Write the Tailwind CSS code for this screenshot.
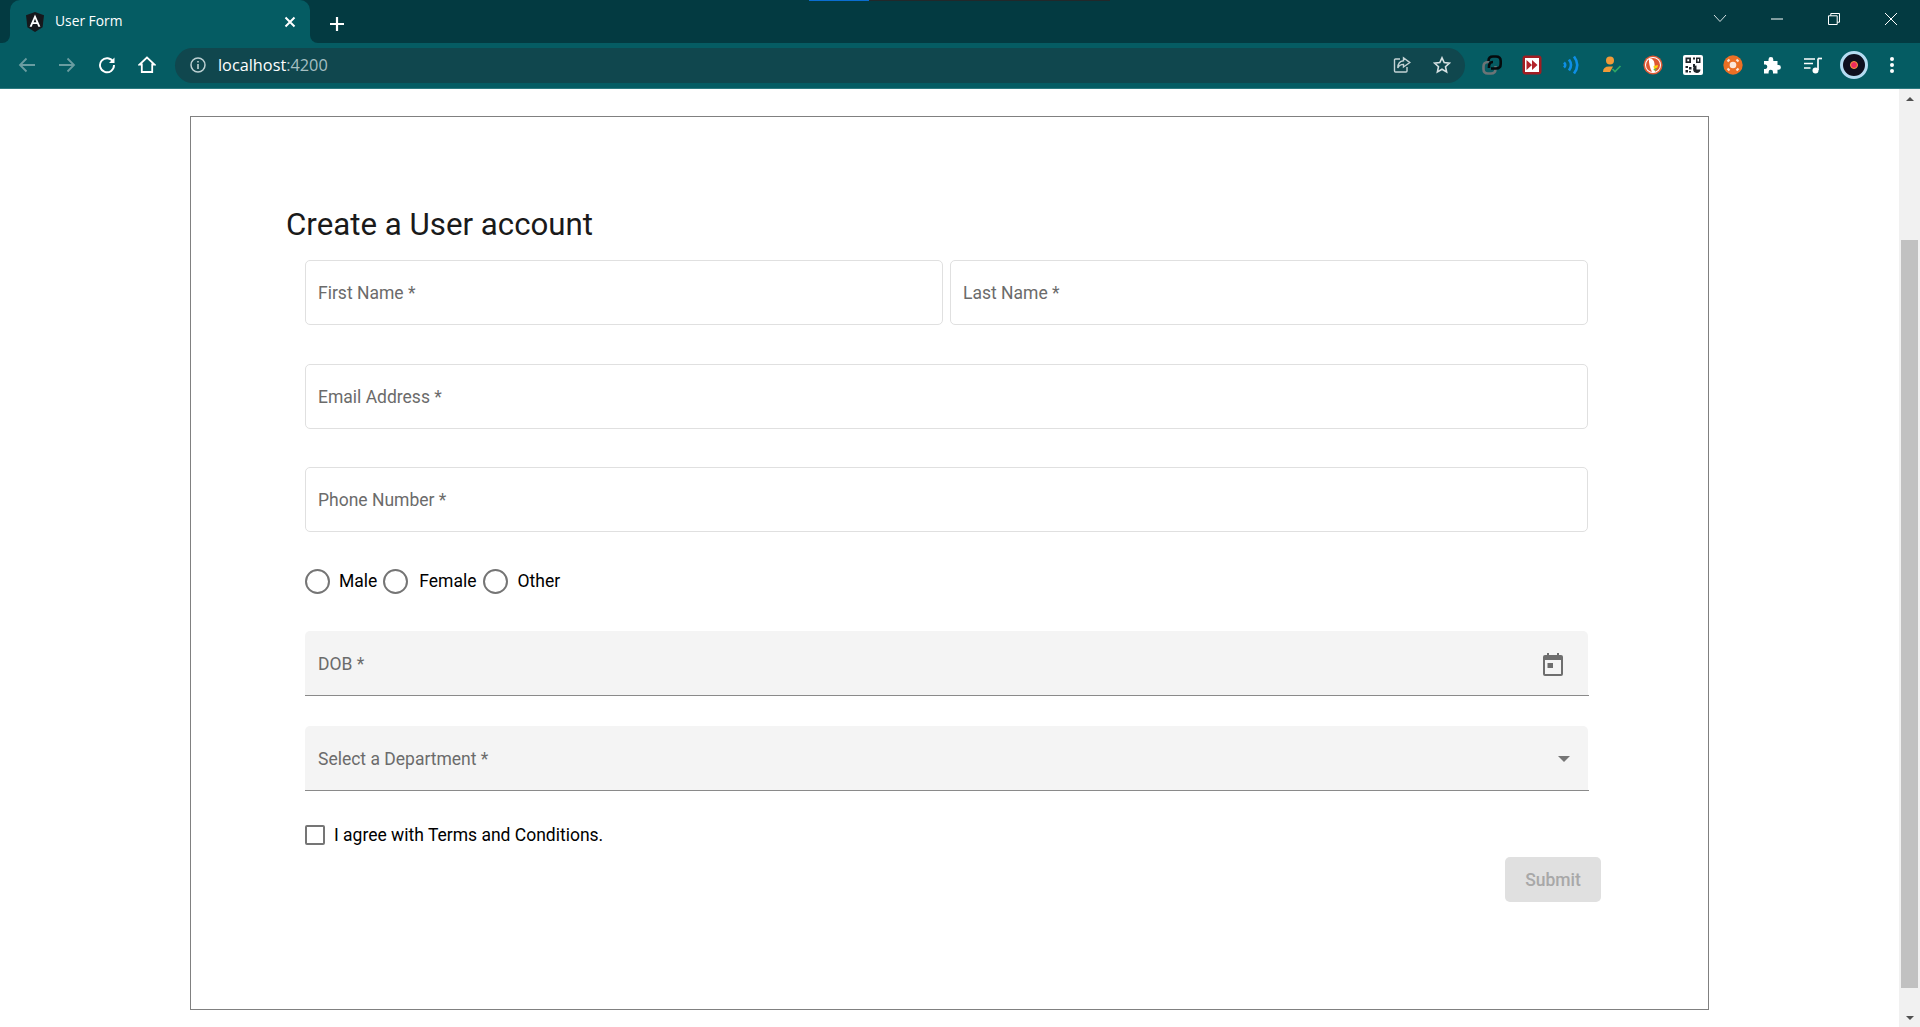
<!DOCTYPE html>
<html lang="en">
<head>
    <meta charset="UTF-8">
    <title>User Form</title>
    <script src="https://cdn.jsdelivr.net/npm/@tailwindcss/browser@4"></script>
</head>
<body class="h-[1027px] overflow-hidden bg-white flex flex-col font-['Roboto',sans-serif]">
    <!-- Tab strip -->
    <div class="relative h-[43px] bg-[#033a41] flex items-end pl-[10px] shrink-0">
        <div class="absolute left-[809px] top-0 w-[60px] h-px bg-[#0a6ed1]"></div>
        <div class="absolute left-[869px] top-0 w-[241px] h-px bg-[#22282a]"></div>
        <div class="relative w-[300px] h-[43px] bg-[#055c63] rounded-t-[10px] flex items-center pl-[15px] pr-[13px]">
            <div class="absolute left-[-8px] bottom-0 w-2 h-2 bg-[#055c63]"><div class="w-2 h-2 bg-[#033a41] rounded-br-[8px]"></div></div>
            <div class="absolute right-[-8px] bottom-0 w-2 h-2 bg-[#055c63]"><div class="w-2 h-2 bg-[#033a41] rounded-bl-[8px]"></div></div>
            <svg class="w-5 h-5 shrink-0" viewBox="0 0 20 20"><path d="M10 0 L1 3.2 L2.4 15.2 L10 20 L17.6 15.2 L19 3.2Z" fill="#16181c"/><path d="M10 2.6 L4.6 14.8 H6.7 L7.8 12 H12.2 L13.3 14.8 H15.4Z M8.6 10.2 L10 6.8 L11.4 10.2Z" fill="#fff" fill-rule="evenodd"/></svg>
            <span class="ml-[10px] text-[13.8px] text-white font-['Open_Sans',sans-serif]">User Form</span>
            <svg class="ml-auto w-[14px] h-[14px]" viewBox="0 0 14 14"><path d="M2.5 2.5 L11.5 11.5 M11.5 2.5 L2.5 11.5" stroke="#fff" stroke-width="2"/></svg>
        </div>
        <svg class="ml-[19px] mb-[11px] w-4 h-4" viewBox="0 0 16 16"><path d="M8 1 V15 M1 8 H15" stroke="#fff" stroke-width="2.2"/></svg>
        <!-- Window controls -->
        <div class="ml-auto flex items-center h-[43px] pb-[6px] pr-[23px]">
            <svg class="w-[14px] h-[9px] mr-[44px]" viewBox="0 0 14 9"><path d="M1 1 L7 7.5 L13 1" fill="none" stroke="#d5e0e2" stroke-width="1"/></svg>
            <svg class="w-3 h-3 mr-[45px]" viewBox="0 0 12 12"><path d="M0 6 H12" stroke="#fff" stroke-width="1"/></svg>
            <svg class="w-3 h-3 mr-[45px]" viewBox="0 0 12 12"><path d="M.5 2.8 H9.2 V11.5 H.5Z M2.8 2.8 V.5 H11.5 V9.2 H9.2" fill="none" stroke="#fff" stroke-width="1"/></svg>
            <svg class="w-3 h-3" viewBox="0 0 12 12"><path d="M0 0 L12 12 M12 0 L0 12" stroke="#fff" stroke-width="1"/></svg>
        </div>
    </div>

    <!-- Toolbar -->
    <div class="h-[46px] bg-[#055c63] border-b border-[#2d7a80] flex items-center shrink-0 pb-[1px]">
        <svg class="ml-[18px] w-[18px] h-[18px]" viewBox="0 0 18 18"><path d="M17 9 H2 M8.5 2.5 L2 9 L8.5 15.5" fill="none" stroke="#6a9da1" stroke-width="1.8"/></svg>
        <svg class="ml-[22px] w-[18px] h-[18px]" viewBox="0 0 18 18"><path d="M1 9 H16 M9.5 2.5 L16 9 L9.5 15.5" fill="none" stroke="#6a9da1" stroke-width="1.8"/></svg>
        <svg class="ml-[22px] w-[18px] h-[18px]" viewBox="0 0 18 18"><path d="M15.2 6 A7 7 0 1 0 16 9" fill="none" stroke="#fff" stroke-width="1.9"/><path d="M16.5 1.5 V7 H11Z" fill="#fff"/></svg>
        <svg class="ml-[22px] w-[18px] h-[18px]" viewBox="0 0 18 18"><path d="M9 1.5 L1.5 8.5 H3.8 V16 H14.2 V8.5 H16.5Z" fill="none" stroke="#fff" stroke-width="1.8"/></svg>
        <!-- Omnibox -->
        <div class="ml-[19px] w-[1290px] h-[35px] bg-[#10474e] rounded-full flex items-center pl-[15px] pr-[14px]">
            <svg class="w-4 h-4" viewBox="0 0 16 16"><circle cx="8" cy="8" r="7" fill="none" stroke="#bcd0d2" stroke-width="1.5"/><path d="M8 7 V12 M8 4 V5.6" stroke="#bcd0d2" stroke-width="1.6"/></svg>
            <span class="ml-[12px] text-[16.3px] text-white font-['Open_Sans',sans-serif]">localhost<span class="text-[#a5bfc2]">:4200</span></span>
            <svg class="ml-auto w-[18px] h-[18px]" viewBox="0 0 18 18"><path d="M7 3 H2.5 Q1.5 3 1.5 4 V15 Q1.5 16 2.5 16 H13 Q14 16 14 15 V11" fill="none" stroke="#c3d3d5" stroke-width="1.4"/><path d="M10.5 1.8 L16.8 6.6 L10.5 11 V8.4 Q6.5 8.4 4.8 12 Q5 5.2 10.5 4.8Z" fill="none" stroke="#c3d3d5" stroke-width="1.4"/></svg>
            <svg class="ml-[22px] w-[18px] h-[18px]" viewBox="0 0 18 18"><path d="M9 1.8 L11.2 6.6 L16.4 7.2 L12.5 10.7 L13.6 15.9 L9 13.2 L4.4 15.9 L5.5 10.7 L1.6 7.2 L6.8 6.6Z" fill="none" stroke="#d5e0e2" stroke-width="1.6"/></svg>
        </div>
        <!-- Extensions -->
        <svg class="ml-[17px] w-5 h-5" viewBox="0 0 20 20"><path d="M7 7 H6 Q1.5 7 1.5 11.5 V14 Q1.5 18.5 6 18.5 H9 Q13.5 18.5 13.5 14 V11" fill="none" stroke="#6b7476" stroke-width="2.6"/><path d="M7 13 Q6.5 7 11 7 M9 13.5 H14 Q18.7 13.5 18.7 9 V6 Q18.7 1.5 14 1.5 H11 Q6.5 1.5 6.5 6" fill="none" stroke="#050a0c" stroke-width="2.6"/></svg>
        <svg class="ml-[20px] w-5 h-5" viewBox="0 0 20 20"><rect x=".5" y=".5" width="19" height="19" rx="3" fill="#a11d22"/><rect x="3" y="3" width="14" height="14" fill="#fff"/><path d="M4.5 5 L10 10 L4.5 15Z M10 5 L15.5 10 L10 15Z" fill="#b3232a"/></svg>
        <svg class="ml-[20px] w-5 h-5" viewBox="0 0 20 20"><g fill="none" stroke="#0d8fe6" stroke-width="2.6"><path d="M2 7.5 Q4.5 10 2 12.5"/><path d="M7 4.5 Q11 10 7 15.5"/><path d="M12 1.5 Q18.5 10 12 18.5"/></g></svg>
        <svg class="ml-[20px] w-5 h-5" viewBox="0 0 20 20"><circle cx="8" cy="5.5" r="4" fill="#f19a38"/><path d="M1 17 Q1 11.5 7 11.5 H11 L8 17Z" fill="#f19a38"/><path d="M10.5 14 L13 16.5 L18.5 11" fill="none" stroke="#2fa866" stroke-width="1.6"/></svg>
        <svg class="ml-[21px] w-5 h-5" viewBox="0 0 20 20"><circle cx="10" cy="10" r="9.6" fill="#de5833"/><circle cx="10" cy="10" r="8" fill="#fff"/><circle cx="10" cy="10" r="7" fill="#de5833"/><path d="M6 3.5 Q11 3 11.5 9 L12 17 H9 Q5.5 10 6 3.5Z" fill="#fff"/><path d="M10.5 11 L15 10 L14.5 12.5 L11 14Z" fill="#fdd20a"/><path d="M10.5 14 L13.5 13.5 L13 15.5 L11 15.5Z" fill="#65bc46"/></svg>
        <svg class="ml-[20px] w-5 h-5" viewBox="0 0 20 20"><rect width="20" height="20" rx="2" fill="#fff"/><path d="M2.5 2.5 H8 V8 H2.5Z M4.3 4.3 V6.2 H6.2 V4.3Z M10 2.5 H12 V4.5 H10Z M13 2.5 H17.5 V8 H13Z M14.5 4 V6.5 H16 V4Z M2.5 11 H5 V13 H2.5Z M6 12 H8.5 V14.5 H6Z M2.5 15 H5 V17.5 H2.5Z M6 16 H8 V17.5 H6Z M10 9 H12 V12 H10Z" fill="#20262a" fill-rule="evenodd"/><path d="M13.5 10.5 A3.7 3.7 0 1 0 17.5 14.5 H13.5Z" fill="#20262a"/></svg>
        <svg class="ml-[20px] w-5 h-5" viewBox="0 0 20 20"><circle cx="10" cy="10" r="9.7" fill="#ec6f24"/><circle cx="10" cy="10" r="3.3" fill="#fbe7da"/><path d="M4.5 6.5 L6.5 4.5 M13.5 4.5 L15.5 6.5 M4.5 13.5 L6.5 15.5 M13.5 15.5 L15.5 13.5" stroke="#fbe7da" stroke-width="2.2"/></svg>
        <svg class="ml-[20px] w-[18px] h-[18px]" viewBox="0 0 18 18"><path d="M1 5 H5.5 V3.5 A2.4 2.4 0 0 1 10.3 3.5 V5 H14.5 V9 H15.5 A2.4 2.4 0 0 1 15.5 13.8 H14.5 V17.5 H10 V16 A2.2 2.2 0 0 0 5.6 16 V17.5 H1 V13 H2.5 A2.3 2.3 0 0 0 2.5 8.5 H1Z" fill="#fff"/></svg>
        <svg class="ml-[22px] w-5 h-5" viewBox="0 0 20 20"><path d="M1 4 H12 M1 8.5 H10 M1 13 H7.5" stroke="#fff" stroke-width="1.7"/><path d="M15 3.5 V15" stroke="#fff" stroke-width="1.7"/><path d="M15 3.5 H19" stroke="#fff" stroke-width="1.7"/><circle cx="12.5" cy="15.5" r="3" fill="#fff"/></svg>
        <div class="ml-[17px] w-[28px] h-[28px] rounded-full bg-[#0e0f1e] border-[3px] border-[#b5dcf2] flex items-center justify-center"><div class="w-2 h-2 rounded-full bg-[#ef2a5f] border border-[#f59a3a]"></div></div>
        <svg class="ml-[22px] w-1 h-[18px]" viewBox="0 0 4 18"><circle cx="2" cy="3" r="2" fill="#fff"/><circle cx="2" cy="9" r="2" fill="#fff"/><circle cx="2" cy="15" r="2" fill="#fff"/></svg>
    </div>

    <!-- Page -->
    <div class="flex-1 flex min-h-0">
        <div class="w-[1899px] pl-[190px] pt-[27px]">
            <div class="w-[1519px] h-[894px] border border-[#808080] pl-[95px] pt-[90px]">
                <h1 class="text-[31.25px] leading-[36px] text-[#1a1a1a] font-normal">Create a User account</h1>
                <form class="ml-[19px] w-[1284px] mt-[17px]">
                    <div class="flex gap-[7px]">
                        <div class="w-[638px] h-[65px] border border-[#e0e0e0] rounded-[5px] flex items-center pl-[12px] pt-[2px] text-[17.5px] text-[#6b6b6b]">First Name *</div>
                        <div class="w-[638px] h-[65px] border border-[#e0e0e0] rounded-[5px] flex items-center pl-[12px] pt-[2px] text-[17.5px] text-[#6b6b6b]">Last Name *</div>
                    </div>
                    <div class="mt-[39px] w-[1283px] h-[65px] border border-[#e0e0e0] rounded-[5px] flex items-center pl-[12px] pt-[2px] text-[17.5px] text-[#6b6b6b]">Email Address *</div>
                    <div class="mt-[38px] w-[1283px] h-[65px] border border-[#e0e0e0] rounded-[5px] flex items-center pl-[12px] pt-[2px] text-[17.5px] text-[#6b6b6b]">Phone Number *</div>
                    <div class="mt-[37px] h-[25px] flex items-center text-[17.5px] text-black">
                        <span class="w-[25px] h-[25px] rounded-full border-2 border-[#757575]"></span>
                        <span class="ml-[9px]">Male</span>
                        <span class="ml-[6px] w-[25px] h-[25px] rounded-full border-2 border-[#757575]"></span>
                        <span class="ml-[11px]">Female</span>
                        <span class="ml-[6px] w-[25px] h-[25px] rounded-full border-2 border-[#757575]"></span>
                        <span class="ml-[10px]">Other</span>
                    </div>
                    <div class="mt-[37px] border-b border-[#8a8a8a]">
                        <div class="w-[1283px] h-[64px] bg-[#f4f4f4] rounded-t-[5px] flex items-center pl-[13px] pr-[25px] pt-[2px] text-[17.5px] text-[#6b6b6b]">
                            DOB *
                            <svg class="ml-auto w-5 h-[23px]" viewBox="0 0 20 23"><path d="M4 0 H6 V2 H14 V0 H16 V2 H18 Q20 2 20 4 V21 Q20 23 18 23 H2 Q0 23 0 21 V4 Q0 2 2 2 H4Z M2 7 V21 H18 V7Z M4.5 10 H10 V15 H4.5Z" fill="#6e6e6e" fill-rule="evenodd"/></svg>
                        </div>
                    </div>
                    <div class="mt-[30px] border-b border-[#8a8a8a]">
                        <div class="w-[1283px] h-[64px] bg-[#f4f4f4] rounded-t-[5px] flex items-center pl-[13px] pr-[18px] pt-[2px] text-[17.5px] text-[#6b6b6b]">
                            Select a Department *
                            <svg class="ml-auto w-3 h-[6px]" viewBox="0 0 12 6"><path d="M0 0 H12 L6 6Z" fill="#757575"/></svg>
                        </div>
                    </div>
                    <label class="mt-[34px] flex items-center h-5 text-[17.5px] text-black">
                        <span class="w-5 h-5 rounded-[2px] border-2 border-[#757575]"></span>
                        <span class="ml-[9px]">I agree with Terms and Conditions.</span>
                    </label>
                </form>
                <button class="block ml-[1219px] mt-[12px] w-[96px] h-[45px] pt-[2px] rounded-[5px] bg-[#e0e0e0] text-[#a8a8a8] text-[17.5px] font-medium">Submit</button>
            </div>
        </div>

        <!-- Scrollbar -->
        <div class="w-[21px] bg-[#f1f1f1] flex flex-col items-center">
            <svg class="mt-[8px] w-2 h-1" viewBox="0 0 8 4"><path d="M0 4 H8 L4 0Z" fill="#505050"/></svg>
            <div class="mt-[139px] w-[17px] h-[748px] bg-[#c1c1c1]"></div>
            <svg class="mt-[28px] w-2 h-1" viewBox="0 0 8 4"><path d="M0 0 H8 L4 4Z" fill="#505050"/></svg>
        </div>
    </div>
</body>
</html>
